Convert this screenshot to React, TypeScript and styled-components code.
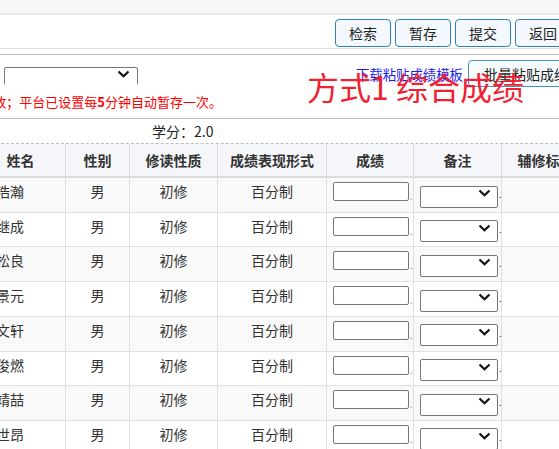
import React from 'react'
import styled, { createGlobalStyle } from 'styled-components'

const GlobalStyle = createGlobalStyle`
  html, body {
    margin: 0;
    padding: 0;
    overflow: hidden;
    background: #fff;
  }
  body {
    font-family: "Noto Sans CJK SC", "Noto Sans", sans-serif;
    color: #333;
  }
`

const Viewport = styled.div`
  position: relative;
  width: 559px;
  height: 449px;
  overflow: hidden;
`

const Page = styled.div`
  width: 702px;
  margin-left: -24px;
`

const TopStrip = styled.div`
  height: 13px;
  background: #f7f7f7;
  border-bottom: 2px solid #ececec;
`

const Toolbar = styled.div`
  height: 34px;
  box-sizing: border-box;
  display: flex;
  justify-content: flex-end;
  align-items: flex-start;
  gap: 4px;
  padding: 4px 107px 0 0;
  border-bottom: 1px solid #dedede;
`

const ToolButton = styled.button`
  width: 56px;
  height: 28px;
  padding: 0;
  border: 1px solid #2f80b3;
  border-radius: 4px;
  background: #f3f9fe;
  color: #222;
  font-family: inherit;
  font-size: 14px;
`

const Gap = styled.div`
  height: 5px;
`

const Section = styled.div`
  border-top: 1px solid #bcbcbc;
  border-bottom: 1px solid #bcbcbc;
  padding: 4px 94px 6px 0;
`

const ControlRow = styled.div`
  display: flex;
  align-items: center;
  height: 29px;
`

const LeftGroup = styled.div`
  width: 162px;
  display: flex;
  justify-content: flex-end;
  align-items: center;
  overflow: hidden;
  white-space: nowrap;
`

const Label = styled.span`
  color: #4fb6d8;
  font-size: 13px;
`

const SelectWrap = styled.div<{ $w: number; $h: number }>`
  position: relative;
  flex: none;
  width: ${p => p.$w}px;
  height: ${p => p.$h}px;
`

const NativeSelect = styled.select`
  appearance: none;
  width: 100%;
  height: 100%;
  box-sizing: border-box;
  border: 1px solid #767676;
  border-radius: 2px;
  background: #fff;
  margin: 0;
`

const Chevron = styled.svg<{ $right: number }>`
  position: absolute;
  right: ${p => p.$right}px;
  top: 50%;
  transform: translateY(-50%);
  pointer-events: none;
`

const Link = styled.a`
  margin-left: auto;
  color: #1c1cf0;
  font-size: 13.4px;
  text-decoration: none;
  white-space: nowrap;
`

const BatchButton = styled.button`
  height: 27px;
  margin-left: 5px;
  padding: 0 15px;
  border: 1px solid #4a8fc0;
  border-radius: 4px;
  background: #f5fafd;
  color: #222;
  font-family: inherit;
  font-size: 14px;
  white-space: nowrap;
`

const Note = styled.div`
  width: 246px;
  margin-top: 4px;
  display: flex;
  justify-content: flex-end;
  overflow: hidden;
  white-space: nowrap;
  color: #f00;
  font-size: 13px;
  line-height: 20px;

  b {
    font-weight: bold;
  }
`

const CreditRow = styled.div`
  height: 24px;
  padding-left: 176px;
  font-size: 14px;
  line-height: 24px;
  color: #222;
  border-bottom: 1px dashed #bbb;
`

const Table = styled.table`
  width: 702px;
  table-layout: fixed;
  border-collapse: separate;
  border-spacing: 0;
`

const Th = styled.th`
  padding: 0;
  line-height: 32px;
  background: #f5f6f9;
  border-right: 1px solid #dcdcdc;
  border-bottom: 2px solid #dcdcdc;
  font-size: 14px;
  font-weight: bold;
  color: #333;
  white-space: nowrap;
  overflow: hidden;
`

const Tr = styled.tr`
  &:nth-child(odd) td {
    background: #f9f9f9;
  }
`

const Td = styled.td<{ $left?: boolean }>`
  padding: 0 0 6px ${p => (p.$left ? '6px' : '0')};
  line-height: 27.7px;
  text-align: ${p => (p.$left ? 'left' : 'center')};
  border-right: 1px solid #e0e0e0;
  border-bottom: 1px solid #e0e0e0;
  font-size: 14px;
  color: #333;
  white-space: nowrap;
  overflow: hidden;
`

const FieldTd = styled.td`
  padding: 4px 0 0 6px;
  vertical-align: top;
  border-right: 1px solid #e0e0e0;
  border-bottom: 1px solid #e0e0e0;
`

const Field = styled.div`
  display: flex;
  align-items: flex-end;
  height: 22px;
`

const ScoreInput = styled.input`
  width: 76px;
  height: 19px;
  box-sizing: border-box;
  margin: 0 0 3px;
  border: 1px solid #767676;
  border-radius: 2px;
`

const Dot = styled.span<{ $color: string }>`
  color: ${p => p.$color};
  font-size: 10px;
  line-height: 10px;
  margin-left: 1px;
  margin-bottom: ${p => (p.$color === '#b8860b' ? '3px' : '5px')};
`

const Annotation = styled.div`
  position: absolute;
  left: 307px;
  top: 65px;
  font-size: 32px;
  line-height: 42px;
  color: #ef2231;
  white-space: nowrap;
`

const ChevronIcon = ({ right }: { right: number }) => (
  <Chevron $right={right} width="13" height="8" viewBox="0 0 13 8">
    <polyline points="1.5,1.5 6.5,6.2 11.5,1.5" fill="none" stroke="#111" strokeWidth="2.2" />
  </Chevron>
)

const names = ['王浩瀚', '李继成', '张松良', '刘景元', '陈文轩', '杨俊燃', '赵靖喆', '黄世昂']

const columns = [
  { title: '姓名', w: 90 },
  { title: '性别', w: 64 },
  { title: '修读性质', w: 88 },
  { title: '成绩表现形式', w: 109 },
  { title: '成绩', w: 87 },
  { title: '备注', w: 88 },
  { title: '辅修标记', w: 88 },
  { title: '操作', w: 88 },
]

const App = () => {
  return (
    <Viewport>
      <GlobalStyle />
      <Page>
        <TopStrip />
        <Toolbar>
          <ToolButton>检索</ToolButton>
          <ToolButton>暂存</ToolButton>
          <ToolButton>提交</ToolButton>
          <ToolButton>返回</ToolButton>
        </Toolbar>
        <Gap />
        <Section>
          <ControlRow>
            <LeftGroup>
              <Label>成绩录入方式：</Label>
              <SelectWrap $w={134} $h={21}>
                <NativeSelect />
                <ChevronIcon right={8} />
              </SelectWrap>
            </LeftGroup>
            <Link href="#">下载粘贴成绩模板</Link>
            <BatchButton>批量粘贴成绩</BatchButton>
          </ControlRow>
          <Note>
            <span>
              请在规定时间内完成成绩录入，提交前请仔细核对确保成绩一致；平台已设置每<b>5</b>分钟自动暂存一次。
            </span>
          </Note>
        </Section>
        <CreditRow>学分：2.0</CreditRow>
        <Table>
          <colgroup>
            {columns.map(c => (
              <col key={c.title} style={{ width: c.w }} />
            ))}
          </colgroup>
          <thead>
            <tr>
              {columns.map(c => (
                <Th key={c.title}>{c.title}</Th>
              ))}
            </tr>
          </thead>
          <tbody>
            {names.map(n => (
              <Tr key={n}>
                <Td $left>{n}</Td>
                <Td>男</Td>
                <Td>初修</Td>
                <Td>百分制</Td>
                <FieldTd>
                  <Field>
                    <ScoreInput />
                    <Dot $color="#b8860b">.</Dot>
                  </Field>
                </FieldTd>
                <FieldTd>
                  <Field>
                    <SelectWrap $w={78} $h={22}>
                      <NativeSelect />
                      <ChevronIcon right={7} />
                    </SelectWrap>
                    <Dot $color="#b00000">.</Dot>
                  </Field>
                </FieldTd>
                <Td />
                <Td />
              </Tr>
            ))}
          </tbody>
        </Table>
      </Page>
      <Annotation>方式1 综合成绩</Annotation>
    </Viewport>
  )
}

export default App
